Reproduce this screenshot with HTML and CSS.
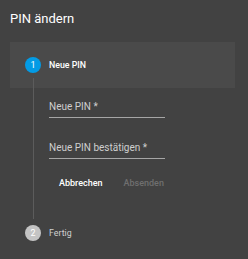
FILE: index.html
```html
<!DOCTYPE html>
<html lang="de">
<head>
<meta charset="utf-8">
<link rel="stylesheet" href="styles.css">
</head>
<body>
<div class="dialog">
  <h2 class="title">PIN ändern</h2>
  <div class="stepper">
    <div class="step-header active">
      <span class="step-icon icon-active">1</span>
      <span class="step-label">Neue PIN</span>
    </div>
    <div class="step-content">
      <div class="field first">
        <span class="field-label">Neue PIN *</span>
        <div class="underline"></div>
      </div>
      <div class="field">
        <span class="field-label">Neue PIN bestätigen *</span>
        <div class="underline"></div>
      </div>
      <div class="actions">
        <span class="btn">Abbrechen</span>
        <span class="btn disabled">Absenden</span>
      </div>
    </div>
    <div class="step-header">
      <span class="step-icon icon-inactive">2</span>
      <span class="step-label inactive">Fertig</span>
    </div>
  </div>
</div>
</body>
</html>
```
FILE: styles.css
```css
html, body {
  margin: 0;
  padding: 0;
  background: #424242;
  font-family: Roboto, "Liberation Sans", sans-serif;
  color: #fff;
}
.dialog {
  width: 248px;
  height: 259px;
  padding: 0 13px 0 10px;
  box-sizing: border-box;
  overflow: hidden;
}
.title {
  margin: 0;
  padding-top: 10px;
  height: 42px;
  box-sizing: border-box;
  font-size: 13px;
  line-height: 17px;
  font-weight: 400;
  color: #fff;
}
.stepper {
  display: flex;
  flex-direction: column;
}
.step-header {
  height: 46px;
  display: flex;
  align-items: center;
  padding-left: 15px;
  position: relative;
  flex: none;
}
.step-header.active {
  background: #4a4a4a;
}
.step-icon {
  width: 16px;
  height: 16px;
  border-radius: 50%;
  display: flex;
  align-items: center;
  justify-content: center;
  font-size: 9px;
  color: #fff;
  flex: none;
}
.icon-active { background: #039be5; }
.icon-inactive { background: #c4c4c4; }
.step-label {
  margin-left: 8px;
  font-size: 8.8px;
  font-weight: 500;
  color: #fff;
}
.step-label.inactive {
  font-weight: 400;
  color: #d0d0d0;
}
.step-content {
  margin: -10px 0 -9px 23px;
  border-left: 1px solid #5c5c5c;
  padding: 10px 0 9px 15px;
  position: relative;
}
.field {
  width: 116px;
  height: 41px;
  display: flex;
  flex-direction: column;
  justify-content: flex-end;
}
.field.first {
  height: 30px;
}
.field-label {
  font-size: 10px;
  line-height: 12px;
  color: #cfcfcf;
  padding-bottom: 4px;
}
.underline {
  height: 1px;
  background: #a6a6a6;
}
.actions {
  display: flex;
  gap: 21px;
  padding: 19px 0 0 10px;
  height: 51px;
  box-sizing: border-box;
}
.btn {
  font-size: 9px;
  font-weight: 500;
  color: #fff;
  line-height: 11px;
}
.btn.disabled {
  color: #6f6f6f;
}
```
